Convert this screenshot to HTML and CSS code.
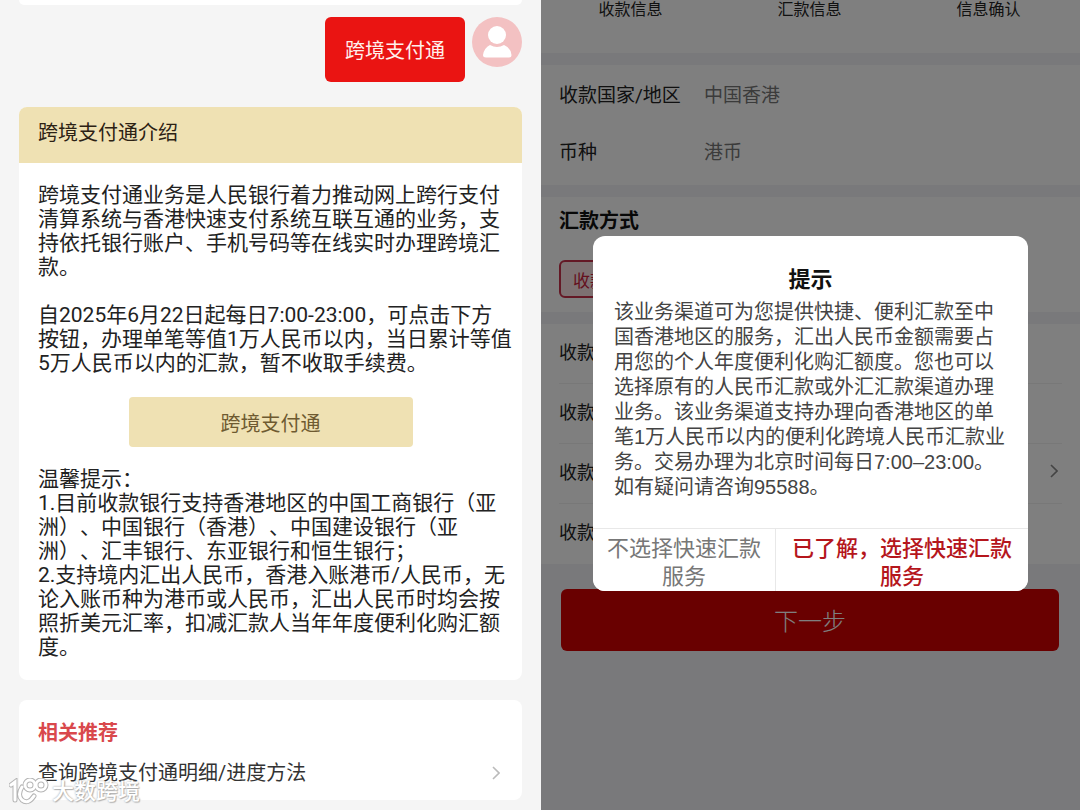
FILE: index.html
```
<!DOCTYPE html>
<html lang="zh-CN">
<head>
<meta charset="UTF-8" />
<meta name="viewport" content="width=device-width, initial-scale=1.0" />
<title>跨境支付通</title>
<link rel="stylesheet" href="styles.css">
</head>
<body>

<main class="chat">
  <div class="prev-card"></div>

  <div class="message">
    <p class="bubble">跨境支付通</p>
    <svg class="avatar" viewBox="0 0 50 50" aria-hidden="true">
      <circle cx="25" cy="25" r="25" fill="#f3c1c2" />
      <circle cx="25" cy="18" r="9" fill="#fff" />
      <path d="M18 28Q25 32 32 28Q39 31 39.500 38Q39.500 40.500 37 40.500H14Q11 40.500 11 38Q12 31 18 28Z" fill="#fff" />
    </svg>
  </div>

  <section class="card intro">
    <h2 class="intro-title">跨境支付通介绍</h2>
    <div class="intro-body">
      <p>跨境支付通业务是人民银行着力推动网上跨行支付<br>清算系统与香港快速支付系统互联互通的业务，支<br>持依托银行账户、手机号码等在线实时办理跨境汇<br>款。</p>
      <p>自2025年6月22日起每日7:00-23:00，可点击下方<br>按钮，办理单笔等值1万人民币以内，当日累计等值<br>5万人民币以内的汇款，暂不收取手续费。</p>
      <button class="pay-btn" type="button">跨境支付通</button>
      <p>温馨提示：<br>1.目前收款银行支持香港地区的中国工商银行（亚<br>洲）、中国银行（香港）、中国建设银行（亚<br>洲）、汇丰银行、东亚银行和恒生银行；<br>2.支持境内汇出人民币，香港入账港币/人民币，无<br>论入账币种为港币或人民币，汇出人民币时均会按<br>照折美元汇率，扣减汇款人当年年度便利化购汇额<br>度。</p>
    </div>
  </section>

  <section class="card related">
    <h2 class="related-title">相关推荐</h2>
    <a class="related-link" href="#">
      <span>查询跨境支付通明细/进度方法</span>
      <svg class="arrow" viewBox="0 0 8 14" aria-hidden="true"><path d="M1 1L7 7L1 13" fill="none" stroke="#bbb" stroke-width="1.600" /></svg>
    </a>
  </section>

  <div class="watermark">
    <svg class="watermark-logo" viewBox="0 0 40 28" aria-hidden="true">
      <g fill="none" stroke="#b5b5b5" stroke-width="5" stroke-linecap="round">
        <path d="M2 7L6 4V22M13 9Q8 17 13 22Q19 27 25 18" />
        <circle cx="21" cy="7" r="5" /><circle cx="32" cy="7" r="5" />
      </g>
      <g fill="none" stroke="#fff" stroke-width="3" stroke-linecap="round">
        <path d="M2 7L6 4V22M13 9Q8 17 13 22Q19 27 25 18" />
        <circle cx="21" cy="7" r="5" /><circle cx="32" cy="7" r="5" />
      </g>
    </svg>
    <span>大数跨境</span>
  </div>
</main>

<div class="remit">
  <ol class="steps">
    <li>收款信息</li>
    <li>汇款信息</li>
    <li>信息确认</li>
  </ol>

  <dl class="group region">
    <div class="field"><dt>收款国家/地区</dt><dd>中国香港</dd></div>
    <div class="field"><dt>币种</dt><dd>港币</dd></div>
  </dl>

  <section class="group method">
    <h2 class="method-title">汇款方式</h2>
    <button class="method-btn" type="button">收款</button>
  </section>

  <ul class="group payee">
    <li>收款</li>
    <li>收款</li>
    <li>收款
      <svg class="arrow" viewBox="0 0 8 14" aria-hidden="true"><path d="M1 1L7 7L1 13" fill="none" stroke="#888" stroke-width="1.600" /></svg>
    </li>
    <li>收款</li>
  </ul>

  <button class="next-btn" type="button">下一步</button>

  <div class="overlay">
    <div class="dialog" role="dialog" aria-labelledby="dialogTitle">
      <h2 class="dialog-title" id="dialogTitle">提示</h2>
      <p class="dialog-text">该业务渠道可为您提供快捷、便利汇款至中<br>国香港地区的服务，汇出人民币金额需要占<br>用您的个人年度便利化购汇额度。您也可以<br>选择原有的人民币汇款或外汇汇款渠道办理<br>业务。该业务渠道支持办理向香港地区的单<br>笔1万人民币以内的便利化跨境人民币汇款业<br>务。交易办理为北京时间每日7:00–23:00。<br>如有疑问请咨询95588。</p>
      <div class="dialog-actions">
        <button class="cancel" type="button">不选择快速汇款<br>服务</button>
        <button class="confirm" type="button">已了解，选择快速汇款<br>服务</button>
      </div>
    </div>
  </div>
</div>

</body>
</html>
```
FILE: styles.css
```
* {
  box-sizing: border-box;
}
body {
  margin: 0;
  min-height: 100vh;
  display: grid;
  grid-template-columns: 1fr 1fr;
  background: #f5f5f5;
  font-family: Roboto, "Noto Sans CJK SC", sans-serif;
  color: #222;
  text-spacing-trim: space-all;
}
h2, p, ol, ul, dl, dd {
  margin: 0;
  padding: 0;
}
ol, ul {
  list-style: none;
}
button {
  border: none;
  padding: 0;
  font-family: inherit;
  cursor: pointer;
}
.arrow {
  width: 8px;
  height: 14px;
}

/* chat side */
.chat {
  position: relative;
  padding: 0 18px 8px 19px;
}
.prev-card {
  height: 5px;
  background: #fff;
  border-radius: 0 0 8px 8px;
}
.message {
  display: flex;
  justify-content: flex-end;
  align-items: flex-start;
  gap: 7px;
  margin: 12px 0 25px;
}
.bubble {
  padding: 20px 20px 16px;
  background: #ea1412;
  color: #fff0ec;
  font-size: 20px;
  line-height: 29px;
  border-radius: 6px;
}
.avatar {
  width: 50px;
  height: 50px;
}
.card {
  background: #fff;
  border-radius: 8px;
  overflow: hidden;
}
.intro-title {
  padding: 11px 19px 15px;
  background: #efe1b3;
  color: #2c2114;
  font-size: 20px;
  font-weight: 400;
  line-height: 30px;
}
.intro-body {
  display: flex;
  flex-direction: column;
  gap: 24px;
  padding: 20px 0 21px 19px;
  font-size: 21px;
  line-height: 24px;
  white-space: nowrap;
}
.pay-btn {
  align-self: center;
  width: 284px;
  height: 50px;
  margin: -2px 19px -4px 0;
  background: #efe1b3;
  color: #6e5a30;
  font-size: 20px;
  border-radius: 4px;
}
.related {
  margin-top: 20px;
  padding: 18px 19px 11px;
}
.related-title {
  color: #d9484c;
  font-size: 20px;
  font-weight: 700;
  line-height: 30px;
}
.related-link {
  display: flex;
  justify-content: space-between;
  align-items: center;
  margin-top: 9px;
  padding-right: 3px;
  color: #333;
  font-size: 20px;
  line-height: 32px;
  text-decoration: none;
}
.watermark {
  position: absolute;
  left: 9px;
  bottom: 2px;
  display: flex;
  align-items: center;
  gap: 3px;
  color: #fff;
  font-size: 22px;
  font-weight: 500;
  line-height: 32px;
  text-shadow: 0 0 2px #999, 1px 1px 1px #bbb;
}
.watermark-logo {
  width: 40px;
  height: 28px;
}

/* remittance form */
.remit {
  position: relative;
  margin-left: 1px;
  background: #f3f3f7;
}
.steps {
  display: flex;
  height: 53px;
  padding-right: 2px;
  background: #fff;
  font-size: 16px;
  line-height: 19px;
  text-align: center;
}
.steps li {
  flex: 1;
}
.group {
  margin-top: 12px;
  background: #fff;
  font-size: 18px;
}
.region {
  padding: 0 18px 6px;
  font-size: 19px;
}
.field {
  display: flex;
  align-items: center;
  height: 57px;
}
.field dt {
  width: 145px;
}
.field dd {
  color: #777;
}
.method {
  padding: 9px 18px 14px;
}
.method-title {
  font-size: 20px;
  font-weight: 700;
  line-height: 30px;
  color: #111;
}
.method-btn {
  width: 110px;
  height: 38px;
  margin-top: 24px;
  border: 2px solid #c8304a;
  border-radius: 6px;
  background: #fbe2e5;
  color: #c8203a;
  font-size: 17px;
  text-align: left;
  padding-left: 12px;
}
.payee {
  padding: 0 18px;
}
.payee li {
  display: flex;
  justify-content: space-between;
  align-items: center;
  height: 60px;
  padding: 0 4px 6px 0;
  border-bottom: 1px solid #f0f0f0;
}
.payee li:last-child {
  border-bottom: none;
}
.next-btn {
  display: block;
  width: calc(100% - 41px);
  height: 62px;
  margin: 25px 21px 0 20px;
  padding-bottom: 2px;
  background: #d20000;
  color: #fff;
  font-size: 24px;
  font-weight: 300;
  border-radius: 6px;
}
.overlay {
  position: absolute;
  inset: 0;
  display: flex;
  justify-content: center;
  align-items: flex-start;
  padding: 236px 52px 0;
  background: rgba(0, 0, 0, 0.5);
}
.dialog {
  flex: 1;
  padding-top: 27px;
  background: #fff;
  border-radius: 12px;
  overflow: hidden;
  font-family: "Liberation Sans", "Noto Sans CJK SC", sans-serif;
}
.dialog-title {
  font-size: 22px;
  font-weight: 700;
  line-height: 34px;
  text-align: center;
  color: #111;
}
.dialog-text {
  padding: 3px 0 28px 21px;
  font-size: 20px;
  line-height: 25px;
  color: #444;
  white-space: nowrap;
}
.dialog-actions {
  display: grid;
  grid-template-columns: 183px 1fr;
  border-top: 1px solid #e8e8e8;
}
.dialog-actions button {
  height: 62px;
  padding-top: 6px;
  background: #fff;
  font-size: 22px;
  line-height: 28px;
  white-space: nowrap;
}
.dialog-actions .cancel {
  border-right: 1px solid #e8e8e8;
  color: #777;
}
.dialog-actions .confirm {
  color: #b5161c;
  font-weight: 500;
}
```
